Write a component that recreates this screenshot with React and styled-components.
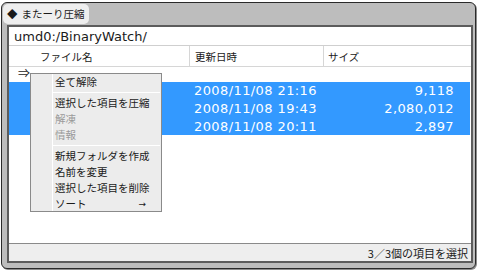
import React from 'react';
import styled, { createGlobalStyle } from 'styled-components';

const GlobalStyle = createGlobalStyle`
  html, body {
    margin: 0;
    padding: 0;
    background: #ffffff;
  }
  body {
    width: 480px;
    height: 272px;
    overflow: hidden;
    font-family: "DejaVu Sans", "Noto Sans CJK JP", sans-serif;
    color: #1a1a1a;
  }
`;

const jp = `"Noto Sans CJK JP", "DejaVu Sans", sans-serif`;

const Window = styled.div`
  box-sizing: border-box;
  margin: 2px 0 0 1px;
  width: 475px;
  height: 267px;
  border: 1px solid #2a2a2a;
  border-radius: 6px;
  background: #bdbdbd;
  box-shadow: 1px 1px 0 #8c8c8c;
  display: flex;
  flex-direction: column;
  padding: 0 2px 5px 5px;
`;

const TitleRow = styled.div`
  display: flex;
  height: 22px;
  margin-left: -4px;
`;

const TitleTab = styled.div`
  display: flex;
  align-items: center;
  gap: 4px;
  height: 20px;
  margin-top: 1px;
  padding: 0 4px;
  background: #eeeeee;
  border-radius: 5px;
  font-family: ${jp};
  font-size: 10.5px;
  line-height: 1;
  white-space: nowrap;
`;

const Panel = styled.div`
  flex: 1;
  display: flex;
  flex-direction: column;
  border: 2px solid #5c5c5c;
  background: #ffffff;
  min-height: 0;
`;

const PathBar = styled.div`
  height: 18px;
  border-bottom: 1px solid #cfcfcf;
  display: flex;
  align-items: center;
  padding-left: 5px;
  font-size: 13px;
`;

const HeaderRow = styled.div`
  display: grid;
  grid-template-columns: 180px 134px 1fr;
  height: 20px;
  border-bottom: 1px solid #d6d6d6;
`;

const HeaderCell = styled.div`
  display: flex;
  align-items: center;
  padding-left: ${({ $pad }) => $pad}px;
  border-left: ${({ $first }) => ($first ? 'none' : '1px solid #d6d6d6')};
  font-family: ${jp};
  font-size: 10.5px;
`;

const List = styled.div`
  position: relative;
  flex: 1;
`;

const ParentRow = styled.div`
  height: 15px;
  padding-left: 9px;
  font-family: ${jp};
  font-size: 12px;
  line-height: 12px;
`;

const FileRow = styled.div`
  display: grid;
  grid-template-columns: 180px 134px 1fr;
  height: 17.67px;
  align-items: center;
  background: ${({ $selected }) => ($selected ? '#3399ff' : 'transparent')};
  color: ${({ $selected }) => ($selected ? '#ffffff' : '#1a1a1a')};
  font-size: 13px;
  letter-spacing: 0.4px;
  margin-right: 1px;
`;

const Cell = styled.div`
  padding-left: ${({ $pad }) => $pad || 0}px;
  padding-right: ${({ $right }) => $right || 0}px;
  text-align: ${({ $align }) => $align || 'left'};
  white-space: nowrap;
`;

const StatusBar = styled.div`
  height: 17px;
  border-top: 1px solid #8a8a8a;
  background: #eeeeee;
  display: flex;
  align-items: center;
  justify-content: flex-end;
  padding-right: 3px;
  font-family: ${jp};
  font-size: 11px;
`;

const Menu = styled.div`
  position: absolute;
  left: 21px;
  top: 6px;
  box-sizing: border-box;
  width: 132px;
  height: 139px;
  border: 1px solid #8a8a8a;
  background: #ececec;
  display: flex;
  flex-direction: column;

  &::before {
    content: '';
    position: absolute;
    left: 21px;
    top: 0;
    bottom: 0;
    width: 1px;
    background: #ffffff;
  }
`;

const MenuItem = styled.div`
  height: 16px;
  flex: none;
  display: flex;
  align-items: center;
  justify-content: space-between;
  padding: 0 15px 0 24px;
  font-family: ${jp};
  font-size: 10.5px;
  line-height: 1;
  white-space: nowrap;
  color: ${({ $disabled }) => ($disabled ? '#9a9a9a' : '#1a1a1a')};
`;

const MenuSeparator = styled.div`
  height: 5px;
  flex: none;
  display: flex;
  align-items: center;
  padding: 0 1px 0 22px;

  &::after {
    content: '';
    flex: 1;
    height: 1px;
    background: #ffffff;
  }
`;

const Arrow = styled.span`
  font-family: "DejaVu Sans", sans-serif;
  font-size: 9px;
`;

const files = [
  { date: '2008/11/08 21:16', size: '9,118' },
  { date: '2008/11/08 19:43', size: '2,080,012' },
  { date: '2008/11/08 20:11', size: '2,897' },
];

export default function App() {
  return (
    <>
      <GlobalStyle />
      <Window>
        <TitleRow>
          <TitleTab>
            <span>◆</span>
            <span>またーり圧縮</span>
          </TitleTab>
        </TitleRow>
        <Panel>
          <PathBar>umd0:/BinaryWatch/</PathBar>
          <HeaderRow>
            <HeaderCell $first $pad={31}>ファイル名</HeaderCell>
            <HeaderCell $pad={5}>更新日時</HeaderCell>
            <HeaderCell $pad={4}>サイズ</HeaderCell>
          </HeaderRow>
          <List>
            <ParentRow>⇒</ParentRow>
            {files.map((f) => (
              <FileRow key={f.date} $selected>
                <Cell />
                <Cell $pad={5}>{f.date}</Cell>
                <Cell $align="right" $right={16}>{f.size}</Cell>
              </FileRow>
            ))}
            <Menu>
              <MenuItem>全て解除</MenuItem>
              <MenuSeparator />
              <MenuItem>選択した項目を圧縮</MenuItem>
              <MenuItem $disabled>解凍</MenuItem>
              <MenuItem $disabled>情報</MenuItem>
              <MenuSeparator />
              <MenuItem>新規フォルダを作成</MenuItem>
              <MenuItem>名前を変更</MenuItem>
              <MenuItem>選択した項目を削除</MenuItem>
              <MenuItem>
                <span>ソート</span>
                <Arrow>→</Arrow>
              </MenuItem>
            </Menu>
          </List>
          <StatusBar>3／3個の項目を選択</StatusBar>
        </Panel>
      </Window>
    </>
  );
}
